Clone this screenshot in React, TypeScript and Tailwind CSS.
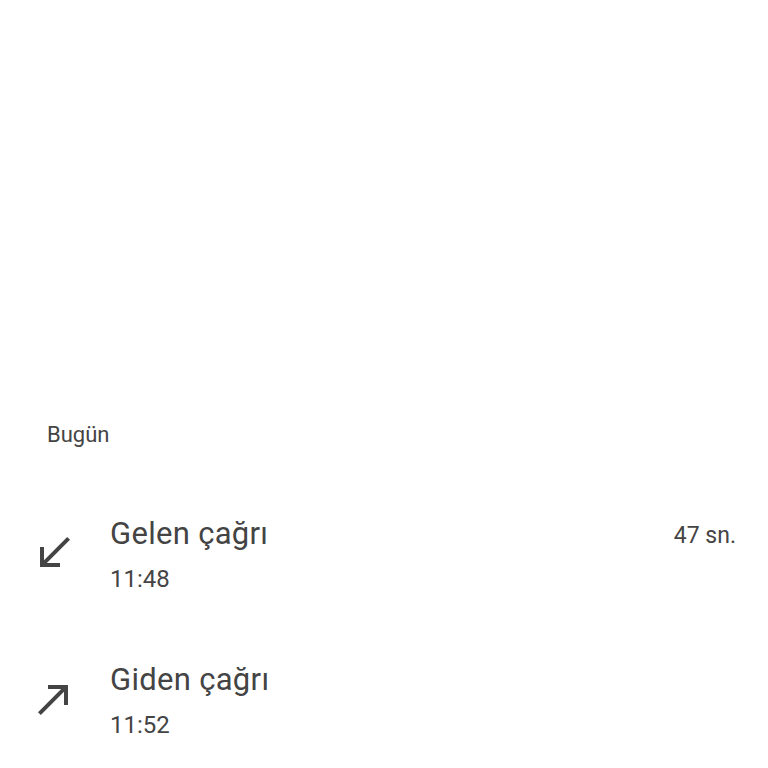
import React from "react";

function Incoming() {
  return (
    <svg width="48" height="48" viewBox="0 0 24 24" fill="#444444">
      <path d="M20 5.41L18.59 4 7 15.59V9H5v10h10v-2H8.41z" />
    </svg>
  );
}
function Outgoing() {
  return (
    <svg width="48" height="48" viewBox="0 0 24 24" fill="#444444">
      <path d="M9 5v2h6.59L4 18.59 5.41 20 17 8.41V15h2V5z" />
    </svg>
  );
}

function Row({ icon, title, time, dur }: { icon: React.ReactNode; title: string; time: string; dur?: string }) {
  return (
    <div className="flex items-start h-[146px]">
      <div className="w-[110px] pl-[30px] pt-[13px] shrink-0">{icon}</div>
      <div className="flex-1 flex flex-col">
        <div className="text-[31px] leading-[36px] tracking-[0.3px]">{title}</div>
        <div className="text-[24px] leading-[30px] mt-[12px]">{time}</div>
      </div>
      {dur && <div className="pr-[32px] pt-[6px] text-[23px] leading-[28px]">{dur}</div>}
    </div>
  );
}

export default function App() {
  return (
    <div className="w-[768px] h-[768px] bg-white text-[#444444] overflow-hidden" style={{ fontFamily: "Roboto, 'Noto Sans', sans-serif" }}>
      <div className="h-[423px]" />
      <div className="pl-[47px] text-[22px] leading-[24px]">Bugün</div>
      <div className="h-[69px]" />
      <Row icon={<Incoming />} title="Gelen çağrı" time="11:48" dur="47 sn." />
      <Row icon={<Outgoing />} title="Giden çağrı" time="11:52" />
    </div>
  );
}
